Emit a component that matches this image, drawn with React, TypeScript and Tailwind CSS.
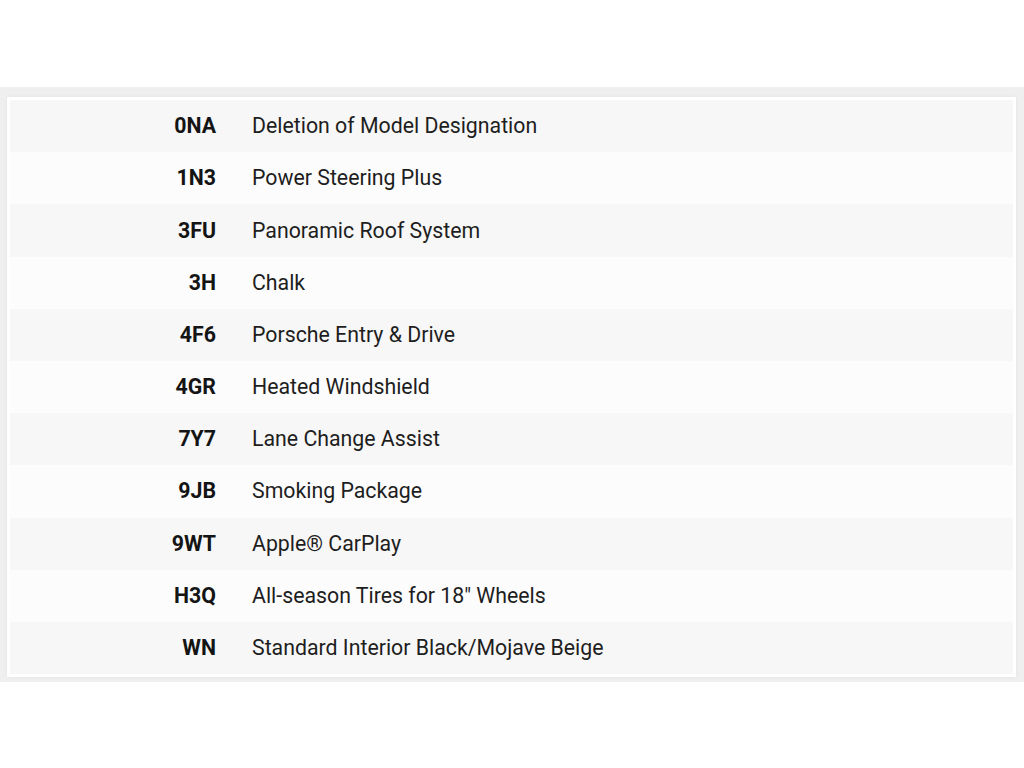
const options = [
  { code: "0NA", label: "Deletion of Model Designation" },
  { code: "1N3", label: "Power Steering Plus" },
  { code: "3FU", label: "Panoramic Roof System" },
  { code: "3H", label: "Chalk" },
  { code: "4F6", label: "Porsche Entry & Drive" },
  { code: "4GR", label: "Heated Windshield" },
  { code: "7Y7", label: "Lane Change Assist" },
  { code: "9JB", label: "Smoking Package" },
  { code: "9WT", label: "Apple® CarPlay" },
  { code: "H3Q", label: 'All-season Tires for 18" Wheels' },
  { code: "WN", label: "Standard Interior Black/Mojave Beige" },
];

export default function App() {
  return (
    <div className="w-full bg-white pt-[87px]" style={{ fontFamily: "Roboto, 'Noto Sans', sans-serif" }}>
      {/* gray frame around the option list */}
      <div className="bg-[#efefef] pt-[10px] pl-[7px] pr-[8px] pb-[5px]">
        <div className="bg-white p-[3px] shadow-[0_0_4px_rgba(0,0,0,0.05)]">
          {options.map((o, i) => (
            <div
              key={o.code}
              className={`flex items-center h-[52.2px] ${i % 2 === 0 ? "bg-[#f7f7f7]" : "bg-[#fcfcfc]"}`}
            >
              <div className="w-[206px] shrink-0 text-right text-[21.3px] font-bold text-[#141414]">{o.code}</div>
              <div className="pl-[36px] text-[21.3px] text-[#1e1e1e]">{o.label}</div>
            </div>
          ))}
        </div>
      </div>
    </div>
  );
}
